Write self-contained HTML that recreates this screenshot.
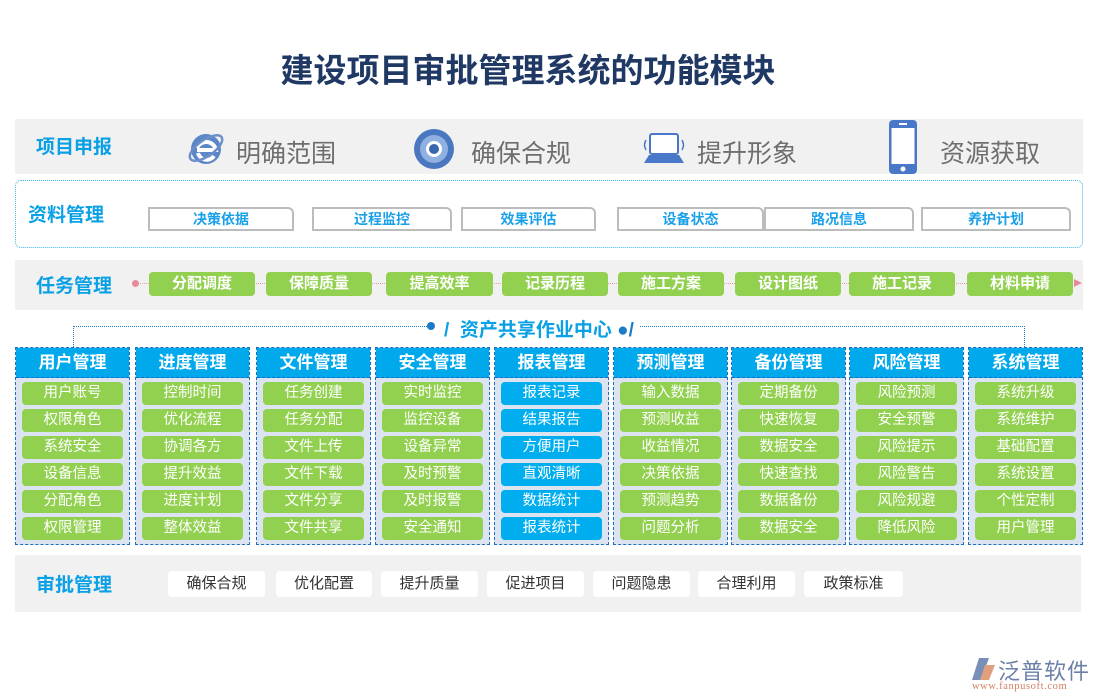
<!DOCTYPE html>
<html><head><meta charset="utf-8"><style>
*{margin:0;padding:0;box-sizing:border-box}
body{width:1100px;height:700px;background:#fff;position:relative;font-family:"Liberation Sans","Noto Sans CJK SC",sans-serif;overflow:hidden}
.a{position:absolute}
.title{left:0;width:1056px;top:44px;text-align:center;font-size:33px;font-weight:bold;color:#1f3864}
.gray{background:#f1f1f1}
.lbl{font-size:19px;font-weight:bold;color:#0aa0e6}
.big{font-size:25px;color:#6e6e6e}
.tab{height:24px;border:2px solid #bcbcbc;border-radius:0 6px 0 0;color:#1aa0e8;font-weight:bold;font-size:14px;text-align:center;line-height:20px;background:#fff}
.gp{height:24px;background:#92d050;border-radius:4px;color:#fff;font-weight:bold;font-size:15px;text-align:center;line-height:24px}
.col{top:347px;width:115px;height:198px;border:1px dashed #1a6fc0;background:#dce4f2}
.hd{height:30px;background:#00a8ec;color:#fff;font-weight:bold;font-size:17px;text-align:center;line-height:30px;border-bottom:1px dashed #1a6fc0}
.it{margin:4px 6px 0 6px;height:23px;background:#92d050;border-radius:4px;color:#fff;font-size:14.5px;text-align:center;line-height:23px}
.blue .it{background:#00aeef}
.wp{top:571px;height:26px;background:#fff;border-radius:4px;font-size:15px;color:#333;text-align:center;line-height:26px}
</style></head><body>
<div class="a title">建设项目审批管理系统的功能模块</div>

<div class="a gray" style="left:15px;top:119px;width:1068px;height:55px"></div>
<div class="a lbl" style="left:36px;top:132px">项目申报</div>
<svg class="a" style="left:186px;top:128px" width="40" height="40" viewBox="0 0 40 40"><circle cx="20" cy="21" r="15" fill="#5b86c8"/><path d="M11 22h19a10 10 0 0 0-19-2" fill="none" stroke="#fff" stroke-width="4"/><path d="M12 25a9 9 0 0 0 16 3" fill="none" stroke="#fff" stroke-width="4"/><ellipse cx="20" cy="20" rx="19" ry="8" transform="rotate(-35 20 20)" fill="none" stroke="#6c8fcc" stroke-width="2.5"/></svg>
<div class="a big" style="left:236px;top:134px">明确范围</div>
<svg class="a" style="left:413px;top:128px" width="42" height="42" viewBox="0 0 42 42"><circle cx="21" cy="21" r="20" fill="#4a78c0"/><circle cx="21" cy="21" r="14" fill="#8fb0e0"/><circle cx="21" cy="21" r="8" fill="#fff"/><circle cx="21" cy="21" r="5" fill="#3a66b0"/></svg>
<div class="a big" style="left:471px;top:134px">确保合规</div>
<svg class="a" style="left:641px;top:132px" width="46" height="34" viewBox="0 0 46 34"><rect x="9" y="2" width="28" height="20" rx="2" fill="#fff" stroke="#4a78c8" stroke-width="2"/><path d="M3 31l5-8h30l5 8z" fill="#4a78c8"/><path d="M5 8q-3 5 0 10M41 8q3 5 0 10" fill="none" stroke="#4a78c8" stroke-width="1.5"/></svg>
<div class="a big" style="left:697px;top:134px">提升形象</div>
<svg class="a" style="left:888px;top:119px" width="30" height="56" viewBox="0 0 30 56"><rect x="1" y="1" width="28" height="54" rx="4" fill="#4a78c8"/><rect x="3.5" y="9" width="23" height="36" fill="#fff"/><rect x="11" y="4" width="8" height="2" fill="#fff"/><circle cx="15" cy="50" r="2.5" fill="#fff"/></svg>
<div class="a big" style="left:940px;top:134px">资源获取</div>

<div class="a" style="left:15px;top:180px;width:1068px;height:68px;border:1px dotted #3cb8e8;border-radius:6px"></div>
<div class="a lbl" style="left:28px;top:200px">资料管理</div>
<div class="a tab" style="left:148px;top:207px;width:146px">决策依据</div>
<div class="a tab" style="left:312px;top:207px;width:140px">过程监控</div>
<div class="a tab" style="left:461px;top:207px;width:135px">效果评估</div>
<div class="a tab" style="left:617px;top:207px;width:147px">设备状态</div>
<div class="a tab" style="left:764px;top:207px;width:150px">路况信息</div>
<div class="a tab" style="left:921px;top:207px;width:150px">养护计划</div>

<div class="a gray" style="left:15px;top:260px;width:1068px;height:50px"></div>
<div class="a lbl" style="left:36px;top:271px">任务管理</div>
<div class="a" style="left:137px;top:283px;width:938px;border-top:1px dotted #e89aa8"></div>
<div class="a" style="left:132px;top:280px;width:7px;height:7px;border-radius:50%;background:#e88a9c"></div>
<div class="a" style="left:1074px;top:279px;border-left:8px solid #e88a9c;border-top:4px solid transparent;border-bottom:4px solid transparent"></div>
<div class="a gp" style="left:149px;top:272px;width:106px">分配调度</div>
<div class="a gp" style="left:266px;top:272px;width:106px">保障质量</div>
<div class="a gp" style="left:386px;top:272px;width:107px">提高效率</div>
<div class="a gp" style="left:502px;top:272px;width:106px">记录历程</div>
<div class="a gp" style="left:618px;top:272px;width:106px">施工方案</div>
<div class="a gp" style="left:735px;top:272px;width:106px">设计图纸</div>
<div class="a gp" style="left:849px;top:272px;width:106px">施工记录</div>
<div class="a gp" style="left:967px;top:272px;width:106px">材料申请</div>

<div class="a" style="left:73px;top:326px;width:358px;height:21px;border-top:1px dotted #1a7cc8;border-left:1px dotted #1a7cc8"></div>
<div class="a" style="left:640px;top:326px;width:385px;height:21px;border-top:1px dotted #1a7cc8;border-right:1px dotted #1a7cc8"></div>
<div class="a" style="left:427px;top:322px;width:8px;height:8px;border-radius:50%;background:#1a7cc8"></div>
<div class="a" style="left:444px;top:315px;font-size:19px;font-weight:bold;color:#0aa0e6">/&nbsp; 资产共享作业中心 <span style="color:#1a7cc8">●/</span></div>

<div class="a col" style="left:15px"><div class="hd">用户管理</div><div class="it">用户账号</div><div class="it">权限角色</div><div class="it">系统安全</div><div class="it">设备信息</div><div class="it">分配角色</div><div class="it">权限管理</div></div>
<div class="a col" style="left:135px"><div class="hd">进度管理</div><div class="it">控制时间</div><div class="it">优化流程</div><div class="it">协调各方</div><div class="it">提升效益</div><div class="it">进度计划</div><div class="it">整体效益</div></div>
<div class="a col" style="left:256px"><div class="hd">文件管理</div><div class="it">任务创建</div><div class="it">任务分配</div><div class="it">文件上传</div><div class="it">文件下载</div><div class="it">文件分享</div><div class="it">文件共享</div></div>
<div class="a col" style="left:375px"><div class="hd">安全管理</div><div class="it">实时监控</div><div class="it">监控设备</div><div class="it">设备异常</div><div class="it">及时预警</div><div class="it">及时报警</div><div class="it">安全通知</div></div>
<div class="a col blue" style="left:494px"><div class="hd">报表管理</div><div class="it">报表记录</div><div class="it">结果报告</div><div class="it">方便用户</div><div class="it">直观清晰</div><div class="it">数据统计</div><div class="it">报表统计</div></div>
<div class="a col" style="left:613px"><div class="hd">预测管理</div><div class="it">输入数据</div><div class="it">预测收益</div><div class="it">收益情况</div><div class="it">决策依据</div><div class="it">预测趋势</div><div class="it">问题分析</div></div>
<div class="a col" style="left:731px"><div class="hd">备份管理</div><div class="it">定期备份</div><div class="it">快速恢复</div><div class="it">数据安全</div><div class="it">快速查找</div><div class="it">数据备份</div><div class="it">数据安全</div></div>
<div class="a col" style="left:849px"><div class="hd">风险管理</div><div class="it">风险预测</div><div class="it">安全预警</div><div class="it">风险提示</div><div class="it">风险警告</div><div class="it">风险规避</div><div class="it">降低风险</div></div>
<div class="a col" style="left:968px"><div class="hd">系统管理</div><div class="it">系统升级</div><div class="it">系统维护</div><div class="it">基础配置</div><div class="it">系统设置</div><div class="it">个性定制</div><div class="it">用户管理</div></div>

<div class="a gray" style="left:15px;top:555px;width:1066px;height:57px"></div>
<div class="a lbl" style="left:36px;top:570px">审批管理</div>
<div class="a wp" style="left:168px;width:97px">确保合规</div>
<div class="a wp" style="left:276px;width:96px">优化配置</div>
<div class="a wp" style="left:381px;width:97px">提升质量</div>
<div class="a wp" style="left:487px;width:97px">促进项目</div>
<div class="a wp" style="left:593px;width:97px">问题隐患</div>
<div class="a wp" style="left:698px;width:97px">合理利用</div>
<div class="a wp" style="left:804px;width:99px">政策标准</div>

<svg class="a" style="left:971px;top:657px" width="26" height="24" viewBox="0 0 26 24"><path d="M8 1h10l-8 22H1z" fill="#7a8fb8"/><path d="M14 8h10l-6 15h-9z" fill="#e0a080"/></svg>
<div class="a" style="left:998px;top:654px;font-size:22px;color:#6b7fa8;letter-spacing:1px">泛普软件</div>
<div class="a" style="left:972px;top:681px;font-size:10.5px;color:#d08060;font-family:'Liberation Serif',serif;letter-spacing:0.6px">www.fanpusoft.com</div>
</body></html>
